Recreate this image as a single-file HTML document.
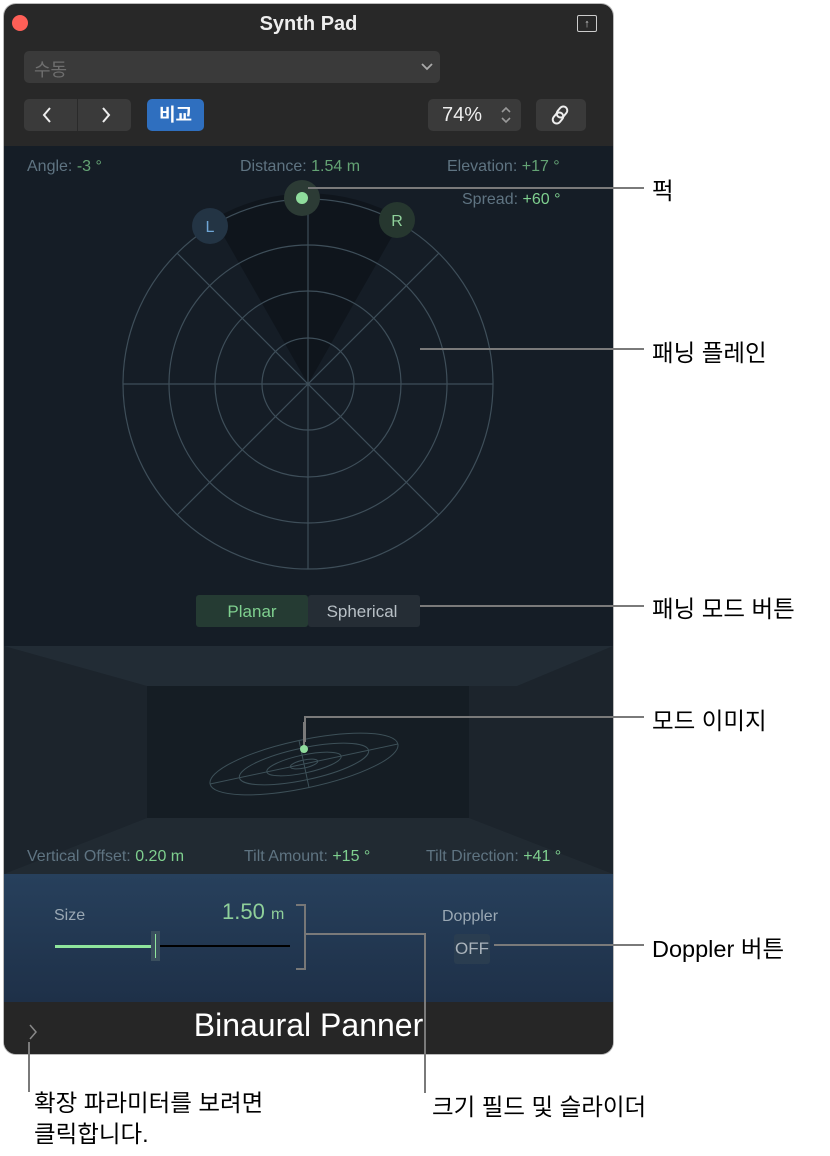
<!DOCTYPE html>
<html><head><meta charset="utf-8"><style>
body{margin:0;width:830px;height:1156px;background:#fff;position:relative;overflow:hidden;font-family:"Liberation Sans","Noto Sans CJK KR",sans-serif}
.a{position:absolute}
.win{left:4px;top:4px;width:609px;height:1050px;border-radius:12px;overflow:hidden;background:#282828;box-shadow:0 0 0 1px #bbb}
.lbl{color:#5f7482;font-size:16px}
.g{color:#7fd08f}
.ann{font-size:23.5px;color:#000}
.ln{background:#7a7a7a}
</style></head><body>
<div class="a win">
 <div class="a" style="left:8px;top:11px;width:16px;height:16px;border-radius:50%;background:#fe5f57"></div>
 <div class="a" style="left:0;width:609px;top:9px;text-align:center;color:#eee;font-weight:bold;font-size:20px">Synth Pad</div>
 <div class="a" style="left:573px;top:11px;width:18px;height:15px;border:1.5px solid #ccc;border-radius:2px;color:#ccc;font-size:11px;text-align:center;line-height:17px">↑</div>
 <div class="a" style="left:20px;top:47px;width:416px;height:32px;background:#3a3a3a;border-radius:5px"></div>
 <div class="a" style="left:30px;top:52px;color:#6e6e6e;font-size:18px">수동</div>
 <svg class="a" style="left:416px;top:58px" width="14" height="10"><path d="M2 2L7 7L12 2" stroke="#aaa" stroke-width="1.8" fill="none"/></svg>
 <div class="a" style="left:20px;top:95px;width:107px;height:32px;background:#3a3a3a;border-radius:5px"></div>
 <div class="a" style="left:73px;top:95px;width:1px;height:32px;background:#2a2a2a"></div>
 <svg class="a" style="left:20px;top:95px" width="107" height="32"><path d="M26 9 L20 16 L26 23 M79 9 L85 16 L79 23" stroke="#eee" stroke-width="2" fill="none"/></svg>
 <div class="a" style="left:143px;top:95px;width:57px;height:32px;background:#2f6fbf;border-radius:5px;color:#fff;font-size:18px;font-weight:bold;text-align:center;line-height:32px">비교</div>
 <div class="a" style="left:424px;top:95px;width:93px;height:32px;background:#3a3a3a;border-radius:5px;color:#eee;font-size:20px;line-height:32px;text-indent:14px">74%</div>
 <svg class="a" style="left:495px;top:101px" width="14" height="20"><path d="M3 7L7 3L11 7M3 13L7 17L11 13" stroke="#999" stroke-width="1.6" fill="none"/></svg>
 <div class="a" style="left:532px;top:95px;width:50px;height:32px;background:#3a3a3a;border-radius:5px"></div>
 <svg class="a" style="left:545px;top:100px" width="24" height="22"><g stroke="#eee" stroke-width="2" fill="none"><rect x="9" y="2" width="8" height="12" rx="4" transform="rotate(40 13 8)"/><rect x="5" y="8" width="8" height="12" rx="4" transform="rotate(40 9 14)"/></g></svg>
 <div class="a" style="left:0;top:142px;width:609px;height:500px;background:#151d26"></div>
 <div class="a lbl" style="left:23px;top:154px">Angle: <span class="g" style="opacity:.75">-3 °</span></div>
 <div class="a lbl" style="left:236px;top:154px">Distance: <span class="g" style="opacity:.75">1.54 m</span></div>
 <div class="a lbl" style="left:443px;top:154px">Elevation: <span class="g" style="opacity:.75">+17 °</span></div>
 <div class="a lbl" style="left:458px;top:187px">Spread: <span class="g">+60 °</span></div>
 <svg class="a" style="left:0;top:142px" width="609" height="500">
  <g transform="translate(304,238)" stroke="#3e4e59" stroke-width="1.2" fill="none">
   <path d="M0 0 L-94 -165 A185 185 0 0 1 94 -165 Z" fill="#0f151c" stroke="none"/>
   <circle r="185"/><circle r="139"/><circle r="93"/><circle r="46"/>
   <path d="M-185 0H185M0 -185V185M-131 -131L131 131M131 -131L-131 131"/>
  </g>
  <circle cx="206" cy="80" r="18" fill="#233444"/><text x="206" y="86" fill="#6fa6d6" font-size="16" text-anchor="middle" font-family="Liberation Sans">L</text>
  <circle cx="393" cy="74" r="18" fill="#26372f"/><text x="393" y="80" fill="#8fd09a" font-size="16" text-anchor="middle" font-family="Liberation Sans">R</text>
  <circle cx="298" cy="52" r="18" fill="#2c3b35"/><circle cx="298" cy="52" r="6" fill="#8fdc9c"/>
  <rect x="192" y="449" width="112" height="32" rx="3" fill="#253b33"/>
  <rect x="304" y="449" width="112" height="32" rx="3" fill="#252d35"/>
  <text x="248" y="471" fill="#7fd08f" font-size="17" text-anchor="middle" font-family="Liberation Sans">Planar</text>
  <text x="358" y="471" fill="#b8c0c6" font-size="17" text-anchor="middle" font-family="Liberation Sans">Spherical</text>
 </svg>
 <svg class="a" style="left:0;top:642px" width="609" height="228">
  <rect width="609" height="228" fill="#1c242c"/>
  <polygon points="0,0 609,0 513,40 143,40" fill="#222c35"/>
  <polygon points="143,172 465,172 609,228 0,228" fill="#212a32"/>
  <rect x="143" y="40" width="322" height="132" fill="#151d24"/>
  <g stroke="#3d5058" fill="none" stroke-width="1" transform="rotate(-12 300 118)">
   <ellipse cx="300" cy="118" rx="96" ry="24"/>
   <ellipse cx="300" cy="118" rx="66" ry="16"/>
   <ellipse cx="300" cy="118" rx="38" ry="9"/>
   <ellipse cx="300" cy="118" rx="14" ry="4"/>
   <path d="M204 118H396M300 94V142"/>
  </g>
  <path d="M300 76V100" stroke="#7a7a7a" stroke-width="2"/>
  <circle cx="300" cy="103" r="4" fill="#8fdc9c"/>
 </svg>
 <div class="a lbl" style="left:23px;top:844px">Vertical Offset: <span class="g">0.20 m</span></div>
 <div class="a lbl" style="left:240px;top:844px">Tilt Amount: <span class="g">+15 °</span></div>
 <div class="a lbl" style="left:422px;top:844px">Tilt Direction: <span class="g">+41 °</span></div>
 <div class="a" style="left:0;top:870px;width:609px;height:128px;background:linear-gradient(#27405c,#1e3048)"></div>
 <div class="a" style="left:50px;top:903px;color:#9aa8b4;font-size:16px">Size</div>
 <div class="a" style="left:218px;top:895px;color:#8fd09a;font-size:22px">1.50 <span style="font-size:16px">m</span></div>
 <div class="a" style="left:51px;top:941px;width:100px;height:3px;background:#8fe59c"></div>
 <div class="a" style="left:151px;top:941px;width:135px;height:2px;background:#000"></div>
 <div class="a" style="left:147px;top:927px;width:9px;height:30px;background:#3a4f5e"></div>
 <div class="a" style="left:151px;top:930px;width:1px;height:24px;background:#8fe59c"></div>
 <div class="a" style="left:292px;top:900px;width:8px;height:62px;border:2px solid #777;border-left:none"></div>
 <div class="a" style="left:438px;top:904px;color:#9aa8b4;font-size:16px">Doppler</div>
 <div class="a" style="left:450px;top:930px;width:36px;height:30px;background:#2a3d50;border-radius:3px;color:#aab3bb;font-size:17px;text-align:center;line-height:30px">OFF</div>
 <div class="a" style="left:0;top:998px;width:609px;height:52px;background:#262626"></div>
 <div class="a" style="left:0;width:609px;top:1003px;text-align:center;color:#fff;font-size:32px">Binaural Panner</div>
 <svg class="a" style="left:22px;top:1018px" width="14" height="20"><path d="M4 3L10 10L4 17" stroke="#888" stroke-width="1.5" fill="none"/></svg>
</div>
<div class="a ln" style="left:308px;top:187px;width:336px;height:2px"></div>
<div class="a ann" style="left:652px;top:172px">퍽</div>
<div class="a ln" style="left:420px;top:348px;width:224px;height:2px"></div>
<div class="a ann" style="left:652px;top:334px">패닝 플레인</div>
<div class="a ln" style="left:420px;top:605px;width:224px;height:2px"></div>
<div class="a ann" style="left:652px;top:590px">패닝 모드 버튼</div>
<div class="a ln" style="left:304px;top:716px;width:340px;height:2px"></div>
<div class="a ln" style="left:304px;top:716px;width:2px;height:26px"></div>
<div class="a ann" style="left:652px;top:702px">모드 이미지</div>
<div class="a ln" style="left:494px;top:944px;width:150px;height:2px"></div>
<div class="a ann" style="left:652px;top:930px">Doppler 버튼</div>
<div class="a ln" style="left:306px;top:933px;width:120px;height:2px"></div>
<div class="a ln" style="left:424px;top:933px;width:2px;height:160px"></div>
<div class="a ann" style="left:432px;top:1088px">크기 필드 및 슬라이더</div>
<div class="a ln" style="left:28px;top:1042px;width:2px;height:50px"></div>
<div class="a ann" style="left:34px;top:1088px;line-height:31px">확장 파라미터를 보려면<br>클릭합니다.</div>
</body></html>
